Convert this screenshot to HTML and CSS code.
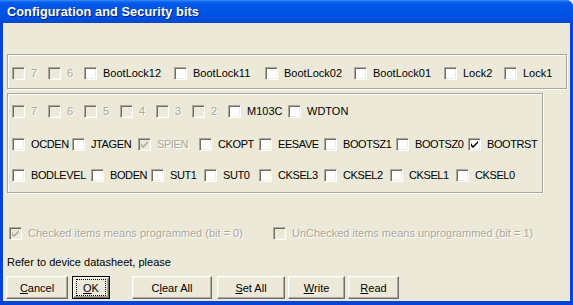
FILE: index.html
```html
<!DOCTYPE html>
<html>
<head>
<meta charset="utf-8">
<link rel="stylesheet" href="styles.css">
</head>
<body>
<div class="window">
  <div class="titlebar"><span class="title">Configuration and Security bits</span></div>
  <div class="client">
    <div class="group g1">
      <div class="row r1">
        <label class="item dis"><span class="cb"></span><span class="lbl">7</span></label>
        <label class="item dis"><span class="cb"></span><span class="lbl">6</span></label>
        <label class="item"><span class="cb"></span><span class="lbl">BootLock12</span></label>
        <label class="item"><span class="cb"></span><span class="lbl">BootLock11</span></label>
        <label class="item"><span class="cb"></span><span class="lbl">BootLock02</span></label>
        <label class="item"><span class="cb"></span><span class="lbl">BootLock01</span></label>
        <label class="item"><span class="cb"></span><span class="lbl">Lock2</span></label>
        <label class="item"><span class="cb"></span><span class="lbl">Lock1</span></label>
      </div>
    </div>
    <div class="group g2">
      <div class="row r2">
        <label class="item dis"><span class="cb"></span><span class="lbl">7</span></label>
        <label class="item dis"><span class="cb"></span><span class="lbl">6</span></label>
        <label class="item dis"><span class="cb"></span><span class="lbl">5</span></label>
        <label class="item dis"><span class="cb"></span><span class="lbl">4</span></label>
        <label class="item dis"><span class="cb"></span><span class="lbl">3</span></label>
        <label class="item dis"><span class="cb"></span><span class="lbl">2</span></label>
        <label class="item"><span class="cb"></span><span class="lbl">M103C</span></label>
        <label class="item"><span class="cb"></span><span class="lbl">WDTON</span></label>
      </div>
      <div class="row r3 caps">
        <label class="item"><span class="cb"></span><span class="lbl">OCDEN</span></label>
        <label class="item"><span class="cb"></span><span class="lbl">JTAGEN</span></label>
        <label class="item dis"><span class="cb"><svg class="chk" width="7" height="7" viewBox="0 0 7 7"><path d="M0 2v3l2 2l5-5v-2l-5 5z" /></svg></span><span class="lbl">SPIEN</span></label>
        <label class="item"><span class="cb"></span><span class="lbl">CKOPT</span></label>
        <label class="item"><span class="cb"></span><span class="lbl">EESAVE</span></label>
        <label class="item"><span class="cb"></span><span class="lbl">BOOTSZ1</span></label>
        <label class="item"><span class="cb"></span><span class="lbl">BOOTSZ0</span></label>
        <label class="item"><span class="cb"><svg class="chk" width="7" height="7" viewBox="0 0 7 7"><path d="M0 2v3l2 2l5-5v-2l-5 5z" /></svg></span><span class="lbl">BOOTRST</span></label>
      </div>
      <div class="row r4 caps">
        <label class="item"><span class="cb"></span><span class="lbl">BODLEVEL</span></label>
        <label class="item"><span class="cb"></span><span class="lbl">BODEN</span></label>
        <label class="item"><span class="cb"></span><span class="lbl">SUT1</span></label>
        <label class="item"><span class="cb"></span><span class="lbl">SUT0</span></label>
        <label class="item"><span class="cb"></span><span class="lbl">CKSEL3</span></label>
        <label class="item"><span class="cb"></span><span class="lbl">CKSEL2</span></label>
        <label class="item"><span class="cb"></span><span class="lbl">CKSEL1</span></label>
        <label class="item"><span class="cb"></span><span class="lbl">CKSEL0</span></label>
      </div>
    </div>
    <div class="legend">
      <label class="item dis"><span class="cb"><svg class="chk" width="7" height="7" viewBox="0 0 7 7"><path d="M0 2v3l2 2l5-5v-2l-5 5z" /></svg></span><span class="lbl">Checked items means programmed (bit = 0)</span></label>
      <label class="item dis"><span class="cb"></span><span class="lbl">UnChecked items means unprogrammed (bit = 1)</span></label>
    </div>
    <div class="note">Refer to device datasheet, please</div>
    <div class="buttons">
      <button class="btn b-cancel"><u>C</u>ancel</button>
      <button class="btn b-ok default"><span class="focus"><u>O</u>K</span></button>
      <button class="btn b-clear">C<u>l</u>ear All</button>
      <button class="btn b-set"><u>S</u>et All</button>
      <button class="btn b-write"><u>W</u>rite</button>
      <button class="btn b-read"><u>R</u>ead</button>
    </div>
  </div>
</div>
</body>
</html>
```
FILE: styles.css
```css
* { box-sizing: border-box; }
html, body { margin: 0; padding: 0; }
body {
  width: 573px;
  height: 305px;
  overflow: hidden;
  background: #ECE9D8;
  font-family: "Liberation Sans", Arial, sans-serif;
  font-size: 11px;
  color: #000;
}
.window {
  width: 573px;
  height: 305px;
  display: flex;
  flex-direction: column;
  background: #0842D8;
  border-top-right-radius: 7px;
  overflow: hidden;
}
.titlebar {
  height: 23px;
  flex: none;
  background: linear-gradient(to bottom, #3A8CF8 0px, #0A62EE 2px, #0058E8 4px, #0054E4 12px, #0050DE 18px, #0046D0 23px);
  display: flex;
  align-items: center;
  padding-left: 7px;
}
.title {
  color: #fff;
  font-weight: bold;
  font-size: 12.7px;
  letter-spacing: 0.1px;
  text-shadow: 1px 1px 0 #0A1E80;
  margin-top: 1px;
}
.client {
  flex: 1;
  margin: 0 3px 4px 3px;
  background: #ECE9D8;
  padding: 31px 3px 0 4px;
  display: flex;
  flex-direction: column;
  align-items: flex-start;
}
.group {
  border: 1px solid #ACA899;
  box-shadow: inset 1px 1px 0 #fff, 1px 1px 0 #fff;
}
.g1 {
  width: 560px;
  height: 35px;
  padding: 12px 0 0 4px;
}
.g2 {
  margin-top: 4px;
  width: 536px;
  height: 100px;
  padding: 11px 0 0 4px;
}
.row { display: grid; align-items: center; height: 13px; }
.r1 { grid-template-columns: 36px 36px 90px 91px 89px 90px 60px auto; }
.r2 { grid-template-columns: 36px 36px 36px 36px 36px 36px 60px auto; }
.r3 { grid-template-columns: 60px 66px 61px 60px 65px 72px 72px auto; margin-top: 20px; }
.r4 { grid-template-columns: 79px 60px 53px 55px 65px 66px 66px auto; margin-top: 18px; }
.item {
  display: flex;
  align-items: center;
  white-space: nowrap;
}
.cb {
  width: 13px;
  height: 13px;
  flex: none;
  background: #fff;
  border: 1px solid;
  border-color: #ACA899 #fff #fff #ACA899;
  box-shadow: inset 1px 1px 0 #716F64, inset -1px -1px 0 #F1EFE2;
  display: flex;
  align-items: center;
  justify-content: center;
}
.dis .cb { background: #ECE9D8; }
.chk { display: block; fill: #000; }
.dis .chk { fill: #ACA899; }
.lbl { margin-left: 6px; line-height: 13px; }
.caps .lbl { letter-spacing: -0.4px; }
.dis .lbl { color: #ACA899; text-shadow: 1px 1px 0 #fff; }
.legend {
  margin-top: 34px;
  width: 560px;
  display: grid;
  grid-template-columns: 264px auto;
  padding-left: 2px;
  height: 13px;
}
.note {
  margin-top: 15px;
  height: 14px;
  line-height: 14px;
}
.buttons {
  margin-top: 7px;
  margin-left: -1px;
  display: flex;
  align-items: stretch;
  height: 23px;
}
.btn {
  font-family: "Liberation Sans", Arial, sans-serif;
  font-size: 11px;
  color: #000;
  background: #ECE9D8;
  height: 23px;
  padding: 0;
  margin: 0;
  border: 1px solid;
  border-color: #fff #716F64 #716F64 #fff;
  box-shadow: inset -1px -1px 0 #ACA899, inset 1px 1px 0 #F1EFE2;
  display: flex;
  align-items: center;
  justify-content: center;
  border-radius: 0;
}
.btn u { text-decoration: underline; text-underline-offset: 1px; }
.b-cancel { width: 62px; }
.b-ok { width: 38px; margin-left: 4px; }
.b-clear { width: 80px; margin-left: 22px; }
.b-set { width: 68px; margin-left: 5px; }
.b-write { width: 57px; margin-left: 3px; }
.b-read { width: 51px; margin-left: 3px; }
.default {
  border: 1px solid #000;
  box-shadow: inset 1px 1px 0 #fff, inset -1px -1px 0 #716F64, inset -2px -2px 0 #ACA899;
}
.focus {
  border: 1px dotted #000;
  padding: 1px 6px;
  width: 30px;
  height: 17px;
  display: flex;
  align-items: center;
  justify-content: center;
}
```
